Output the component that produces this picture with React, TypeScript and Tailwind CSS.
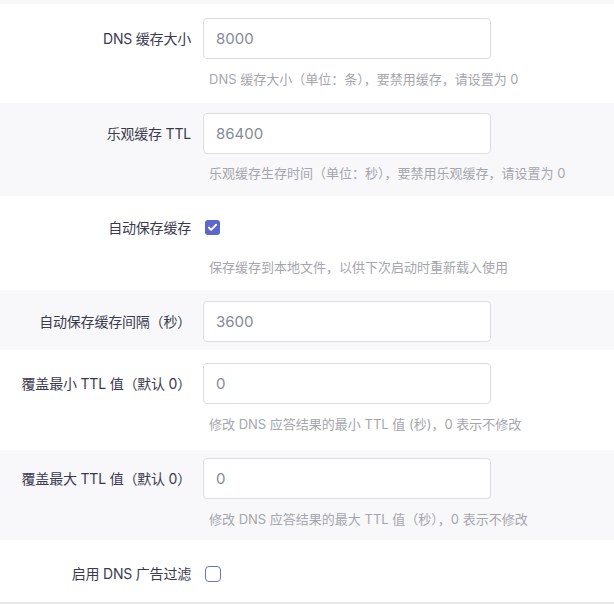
import { Check } from "lucide-react";

const font = { fontFamily: '"Inter", "Noto Sans CJK SC", sans-serif' };

type Row = {
  label: string;
  kind: "input" | "checkbox";
  value?: string;
  checked?: boolean;
  help?: string;
  gray: boolean;
  pad: string;
  helpGap?: string;
};

const rows: Row[] = [
  { label: "DNS 缓存大小", kind: "input", value: "8000", help: "DNS 缓存大小（单位：条），要禁用缓存，请设置为 0", gray: false, pad: "pt-[14px] pb-[14px]", helpGap: "mt-[10px]" },
  { label: "乐观缓存 TTL", kind: "input", value: "86400", help: "乐观缓存生存时间（单位：秒），要禁用乐观缓存，请设置为 0", gray: true, pad: "pt-[10px] pb-[13px]", helpGap: "mt-[9px]" },
  { label: "自动保存缓存", kind: "checkbox", checked: true, help: "保存缓存到本地文件，以供下次启动时重新载入使用", gray: false, pad: "pt-[14px] pb-[13px]", helpGap: "mt-[12px]" },
  { label: "自动保存缓存间隔（秒）", kind: "input", value: "3600", gray: true, pad: "pt-[11px] pb-[8px]" },
  { label: "覆盖最小 TTL 值（默认 0）", kind: "input", value: "0", help: "修改 DNS 应答结果的最小 TTL 值 (秒)，0 表示不修改", gray: false, pad: "pt-[13px] pb-[16px]", helpGap: "mt-[10px]" },
  { label: "覆盖最大 TTL 值（默认 0）", kind: "input", value: "0", help: "修改 DNS 应答结果的最大 TTL 值（秒），0 表示不修改", gray: true, pad: "pt-[8px] pb-[11px]", helpGap: "mt-[10px]" },
  { label: "启用 DNS 广告过滤", kind: "checkbox", checked: false, gray: false, pad: "pt-[14px] pb-[9px]" },
];

function FieldRow({ row }: { row: Row }) {
  const boxH = row.kind === "input" ? "h-[41px]" : row.help ? "h-[35px]" : "h-[39px]";
  return (
    <div className={`flex ${row.pad} ${row.gray ? "bg-[#f8f8fa]" : "bg-white"}`}>
      <div className={`w-[191px] shrink-0 ${boxH} flex items-center justify-end text-[14px] tracking-[-0.2px] text-[#3a3a4f] whitespace-nowrap`}>
        {row.label}
      </div>
      <div className="ml-[12px] flex flex-col">
        <div className={`${boxH} flex items-center`}>
          {row.kind === "input" ? (
            <input
              readOnly
              value={row.value}
              style={font}
              className="w-[288px] h-[41px] rounded-[4px] border border-[#dcdde3] bg-white px-[12px] text-[15px] text-[#858a96] outline-none"
            />
          ) : row.checked ? (
            <span className="ml-[2px] w-[15px] h-[15px] rounded-[3px] bg-[#5b67ca] flex items-center justify-center">
              <Check className="w-[11px] h-[11px] text-white" strokeWidth={4} />
            </span>
          ) : (
            <span className="ml-[2px] w-[16px] h-[16px] rounded-[4px] border-[1.5px] border-[#6a73c6] bg-white" />
          )}
        </div>
        {row.help && (
          <div className={`${row.helpGap} ml-[6px] h-[20px] leading-[20px] text-[13px] text-[#a5a6ad] whitespace-nowrap`}>
            {row.help}
          </div>
        )}
      </div>
    </div>
  );
}

export default function App() {
  return (
    <div style={font} className="w-[614px] h-[605px] bg-white overflow-hidden">
      <div className="h-[4px] bg-[#f8f8fa]" />
      {rows.map((r) => (
        <FieldRow key={r.label} row={r} />
      ))}
      <div className="h-[2px] bg-[#e8e8ec]" />
    </div>
  );
}
